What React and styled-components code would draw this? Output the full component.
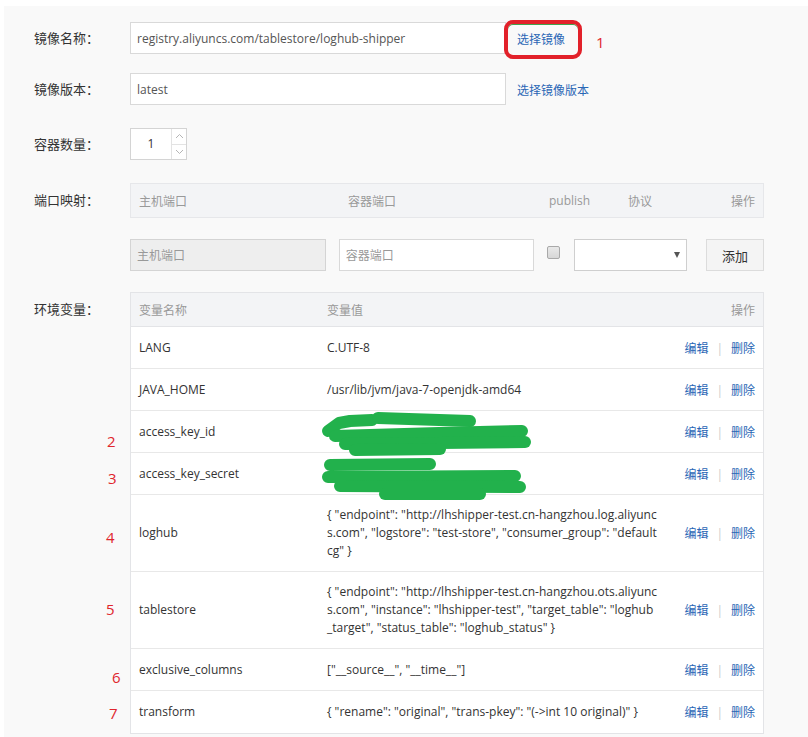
import styled, { createGlobalStyle } from "styled-components";

const GlobalStyle = createGlobalStyle`
  body {
    margin: 0;
    background: #fff;
    font-family: "Open Sans", "Noto Sans CJK SC", sans-serif;
    font-size: 12px;
    color: #333;
  }
  * { box-sizing: border-box; }
`;

const envRows = [
  { name: "LANG", value: "C.UTF-8" },
  { name: "JAVA_HOME", value: "/usr/lib/jvm/java-7-openjdk-amd64" },
  { name: "access_key_id", hidden: 1, mark: { n: 2, x: -24, y: 23 } },
  { name: "access_key_secret", hidden: 2, mark: { n: 3, x: -23, y: 18 } },
  {
    name: "loghub",
    value:
      '{ "endpoint": "http://lhshipper-test.cn-hangzhou.log.aliyuncs.com", "logstore": "test-store", "consumer_group": "defaultcg" }',
    mark: { n: 4, x: -25, y: 35 },
  },
  {
    name: "tablestore",
    value:
      '{ "endpoint": "http://lhshipper-test.cn-hangzhou.ots.aliyuncs.com", "instance": "lhshipper-test", "target_table": "loghub_target", "status_table": "loghub_status" }',
    mark: { n: 5, x: -25, y: 30 },
  },
  {
    name: "exclusive_columns",
    value: '["__source__", "__time__"]',
    mark: { n: 6, x: -19, y: 21 },
  },
  {
    name: "transform",
    value: '{ "rename": "original", "trans-pkey": "(->int 10 original)" }',
    mark: { n: 7, x: -22, y: 15 },
  },
];

const Scribble = ({ kind }) => {
  const lines =
    kind === 1
      ? [
          "9,20 20,12 31,10 53,9",
          "59,7 151,10",
          "16,25 120,22 203,20",
          "26,33 206,31",
          "36,39 121,38",
        ]
      : ["11,12 111,11", "9,24 196,23", "21,33 201,34", "66,41 161,41"];
  return (
    <ScribbleSvg width="220" height="50" viewBox="0 0 220 50">
      {lines.map((p) => (
        <polyline
          key={p}
          points={p}
          fill="none"
          stroke="#22b14c"
          strokeWidth="12"
          strokeLinecap="round"
          strokeLinejoin="round"
        />
      ))}
    </ScribbleSvg>
  );
};

const App = () => {
  return (
    <Page>
      <GlobalStyle />
      <FormRow $gap={19}>
        <Label>镜像名称：</Label>
        <TextInput $w={376} defaultValue="registry.aliyuncs.com/tablestore/loghub-shipper" readOnly />
        <LinkWrap>
          <Link>选择镜像</Link>
          <Circle />
          <Note $x={79} $y={8}>1</Note>
        </LinkWrap>
      </FormRow>

      <FormRow $gap={23}>
        <Label>镜像版本：</Label>
        <TextInput $w={376} defaultValue="latest" readOnly />
        <LinkWrap>
          <Link>选择镜像版本</Link>
        </LinkWrap>
      </FormRow>

      <FormRow $gap={23}>
        <Label>容器数量：</Label>
        <Spinner>
          <SpinValue>1</SpinValue>
          <SpinArrows>
            <SpinBtn>
              <svg width="9" height="6" viewBox="0 0 9 6">
                <polyline points="1,5 4.5,1.5 8,5" fill="none" stroke="#b5b5b5" strokeWidth="1" />
              </svg>
            </SpinBtn>
            <SpinBtn $bottom>
              <svg width="9" height="6" viewBox="0 0 9 6">
                <polyline points="1,1 4.5,4.5 8,1" fill="none" stroke="#b5b5b5" strokeWidth="1" />
              </svg>
            </SpinBtn>
          </SpinArrows>
        </Spinner>
      </FormRow>

      <FormRow $gap={21} $top>
        <Label $lh={35}>端口映射：</Label>
        <PortBlock>
          <PortHead>
            <HeadCell>主机端口</HeadCell>
            <HeadCell>容器端口</HeadCell>
            <HeadCell>publish</HeadCell>
            <HeadCell>协议</HeadCell>
            <HeadCell $right>操作</HeadCell>
          </PortHead>
          <PortInputs>
            <TextInput $w={196} $disabled placeholder="主机端口" disabled />
            <TextInput $w={196} placeholder="容器端口" readOnly />
            <Check />
            <Select>
              <Caret />
            </Select>
            <AddButton>添加</AddButton>
          </PortInputs>
        </PortBlock>
      </FormRow>

      <FormRow $gap={0} $top>
        <Label $lh={35}>环境变量：</Label>
        <EnvTable>
          <EnvHead>
            <HeadCell>变量名称</HeadCell>
            <HeadCell>变量值</HeadCell>
            <HeadCell $right>操作</HeadCell>
          </EnvHead>
          {envRows.map((r) => (
            <EnvRow key={r.name}>
              {r.mark && (
                <Note $x={r.mark.x} $y={r.mark.y}>
                  {r.mark.n}
                </Note>
              )}
              <Cell>{r.name}</Cell>
              <ValueCell>{r.hidden ? <Scribble kind={r.hidden} /> : r.value}</ValueCell>
              <ActionCell>
                <Link>编辑</Link>
                <Sep>|</Sep>
                <Link>删除</Link>
              </ActionCell>
            </EnvRow>
          ))}
        </EnvTable>
      </FormRow>
    </Page>
  );
};

const Page = styled.div`
  margin: 6px 0 0 4px;
  padding: 16px 0 6px 30px;
  background: #f9f9f9;
  min-height: 731px;
`;

const FormRow = styled.div`
  display: flex;
  align-items: ${(p) => (p.$top ? "flex-start" : "center")};
  margin-bottom: ${(p) => p.$gap}px;
`;

const Label = styled.div`
  flex: none;
  width: 96px;
  font-size: 13px;
  color: #333;
  line-height: ${(p) => p.$lh || 32}px;
  height: ${(p) => p.$lh || 32}px;
`;

const TextInput = styled.input`
  width: ${(p) => p.$w}px;
  height: 32px;
  padding: 0 6px;
  border: 1px solid ${(p) => (p.$disabled ? "#d4d4d4" : "#d9d9d9")};
  background: ${(p) => (p.$disabled ? "#eeeeee" : "#fff")};
  font-family: inherit;
  font-size: 12px;
  color: #555;
  outline: none;
  &::placeholder {
    color: #999;
  }
`;

const LinkWrap = styled.span`
  position: relative;
  margin-left: 11px;
  padding-top: 4px;
  line-height: 18px;
`;

const Link = styled.span`
  color: #2a66b5;
  font-size: 12px;
  cursor: pointer;
`;

const Circle = styled.span`
  position: absolute;
  left: -13px;
  right: -17px;
  top: -7px;
  bottom: -10px;
  border: 4px solid #e2212a;
  border-radius: 9px;
  box-shadow: inset 0 1px 0 #3fa34d;
`;

const Note = styled.span`
  position: absolute;
  left: ${(p) => p.$x}px;
  top: ${(p) => p.$y}px;
  font-size: 15px;
  line-height: 15px;
  color: #e0262d;
`;

const Spinner = styled.div`
  display: flex;
  width: 57px;
  height: 32px;
  border: 1px solid #d4d4d4;
  background: #fff;
`;

const SpinValue = styled.div`
  flex: 1;
  text-align: center;
  line-height: 30px;
  font-size: 12px;
  color: #333;
`;

const SpinArrows = styled.div`
  width: 15px;
  display: flex;
  flex-direction: column;
  border-left: 1px solid #e3e3e3;
`;

const SpinBtn = styled.div`
  flex: 1;
  display: flex;
  align-items: center;
  justify-content: center;
  border-top: ${(p) => (p.$bottom ? "1px solid #e3e3e3" : "none")};
`;

const PortBlock = styled.div`
  width: 634px;
`;

const PortHead = styled.div`
  display: grid;
  grid-template-columns: 209px 201px 79px 1fr auto;
  height: 35px;
  align-items: center;
  border: 1px solid #e6e7ea;
  background: #f3f4f6;
  margin-bottom: 21px;
`;

const HeadCell = styled.div`
  padding: 0 8px;
  font-size: 12px;
  color: #999;
  text-align: ${(p) => (p.$right ? "right" : "left")};
`;

const PortInputs = styled.div`
  display: flex;
  align-items: center;
  & > :nth-child(2) {
    margin-left: 13px;
  }
`;

const Check = styled.span`
  width: 13px;
  height: 13px;
  margin: -6px 0 0 13px;
  border: 1px solid #a9a9a9;
  border-radius: 2px;
  background: linear-gradient(#e9e9e9, #d7d7d7);
`;

const Select = styled.div`
  width: 113px;
  height: 32px;
  margin-left: 14px;
  border: 1px solid #cfcfcf;
  background: #fff;
  display: flex;
  align-items: center;
  justify-content: flex-end;
  padding-right: 6px;
`;

const Caret = styled.span`
  width: 0;
  height: 0;
  border-left: 3px solid transparent;
  border-right: 3px solid transparent;
  border-top: 6px solid #555;
`;

const AddButton = styled.button`
  width: 58px;
  height: 32px;
  margin-left: 19px;
  border: 1px solid #dcdcdc;
  background: #f4f4f4;
  font-family: inherit;
  font-size: 13px;
  color: #333;
  padding: 0;
`;

const EnvTable = styled.div`
  width: 634px;
  border: 1px solid #e3e4e7;
  background: #fff;
`;

const EnvHead = styled.div`
  display: grid;
  grid-template-columns: 188px 347px 1fr;
  height: 34px;
  align-items: center;
  background: #f3f4f6;
  border-bottom: 1px solid #e3e4e7;
`;

const EnvRow = styled.div`
  position: relative;
  display: grid;
  grid-template-columns: 188px 347px 1fr;
  align-items: center;
  min-height: 42px;
  border-bottom: 1px solid #e8e8e8;
  &:last-child {
    border-bottom: none;
  }
`;

const Cell = styled.div`
  padding: 11px 8px;
  font-size: 12px;
  line-height: 18px;
  color: #333;
`;

const ValueCell = styled(Cell)`
  position: relative;
  word-break: break-all;
  align-self: stretch;
  display: flex;
  align-items: center;
`;

const ScribbleSvg = styled.svg`
  position: absolute;
  left: 0;
  top: 0;
  overflow: visible;
`;

const ActionCell = styled.div`
  padding: 0 8px;
  text-align: right;
  white-space: nowrap;
`;

const Sep = styled.span`
  margin: 0 8px;
  color: #ccc;
`;

export default App;
